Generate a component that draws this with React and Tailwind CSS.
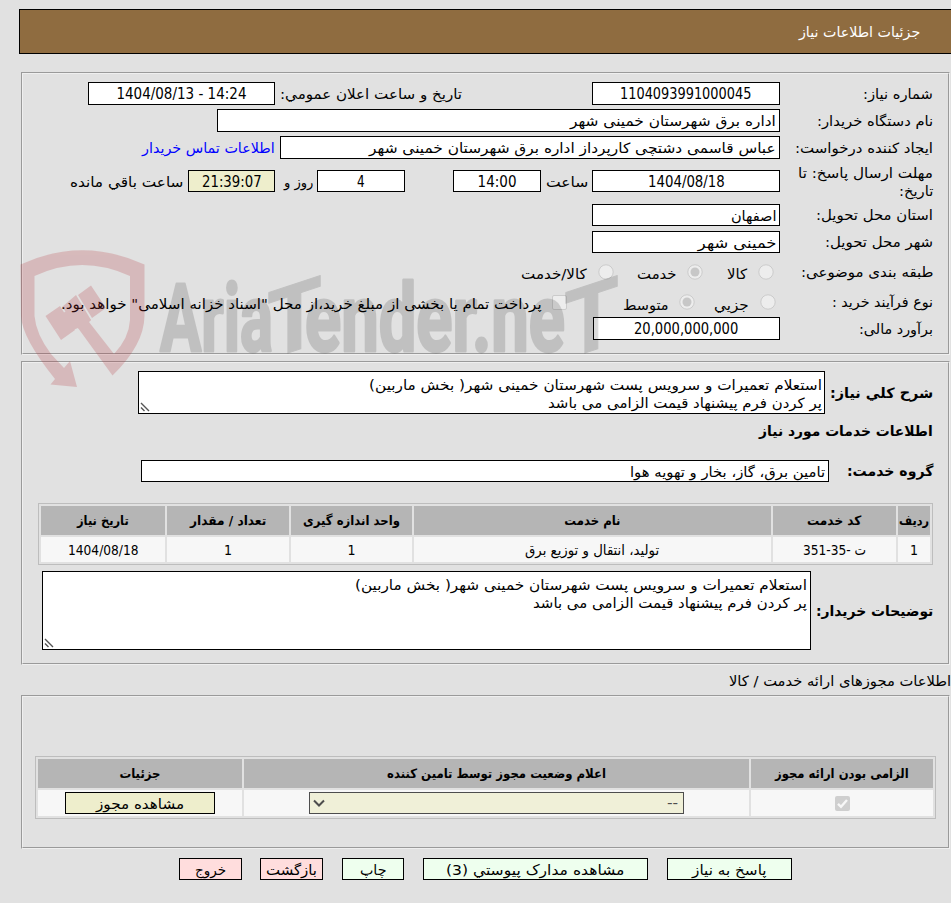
import React, { useLayoutEffect, useRef } from "react";

// A single line of text fitted horizontally to the width given in className.
function Fit({ className = "", center = false, children }) {
  const outer = useRef(null);
  const inner = useRef(null);
  useLayoutEffect(() => {
    const fit = () => {
      const natural = inner.current.offsetWidth;
      if (natural) inner.current.style.transform = `scaleX(${outer.current.offsetWidth / natural})`;
    };
    fit();
    document.fonts?.ready.then(fit);
  }, []);
  return (
    <span ref={outer} className={`block shrink-0 text-right leading-[18px] whitespace-nowrap ${center ? "mx-auto text-[15px]" : ""} ${className}`}>
      <span ref={inner} className="inline-block origin-right">{children}</span>
    </span>
  );
}

function Panel({ className = "", children }) {
  return (
    <section className={`mr-px w-[929px] border border-t-[#9a9a9a] border-l-[#9a9a9a] border-r-[#efefef] border-b-[#efefef] ${className}`}>
      <div className="h-full border border-t-[#efefef] border-l-[#efefef] border-r-[#9a9a9a] border-b-[#9a9a9a]">{children}</div>
    </section>
  );
}

function Row({ className = "", children }) {
  return <div className={`flex items-center pr-[15px] ${className}`}>{children}</div>;
}

function Label({ className = "w-[153px]", children }) {
  return <div className={`shrink-0 ${className}`}>{children}</div>;
}

function Box({ className = "bg-white", children }) {
  return <div className={`flex shrink-0 items-center border border-black px-[3px] pt-px ${className}`}>{children}</div>;
}

function Radio({ checked = false, className = "" }) {
  return (
    <svg viewBox="0 0 16 16" className={`size-4 shrink-0 ${className}`}>
      <circle cx="8" cy="8" r="7.2" fill="#ededed" stroke="#cbcbcb" />
      {checked && <circle cx="8" cy="8" r="4.5" fill="#c7c7c7" />}
    </svg>
  );
}

function Grip() {
  return (
    <svg viewBox="0 0 10 10" className="absolute bottom-[1px] left-[1px] size-[10px]" stroke="#555" strokeWidth="1.4" fill="none">
      <path d="M1 1 L9 9 M1 5.500 L4.500 9" />
    </svg>
  );
}

function Th({ className = "", children }) {
  return <div className={`flex h-[29px] items-center justify-center bg-[#b5b5b5] text-[13px] font-bold ${className}`}>{children}</div>;
}

function Td({ className = "", children }) {
  return <div className={`flex items-center justify-center bg-[#f7f7f7] text-[14px] ${className}`}>{children}</div>;
}

function Action({ className = "", children }) {
  return <button className={`flex h-[22px] shrink-0 items-center justify-center border border-black pt-[2px] ${className}`}>{children}</button>;
}

function Watermark() {
  return (
    <svg viewBox="0 0 951 903" className="pointer-events-none absolute top-0 left-0 h-[903px] w-[951px] [direction:ltr]">
      <g fill="#b43038" opacity="0.22">
        <path fillRule="evenodd" d="M20.500 264.500 Q82 236 144.500 264.500 V316 Q144 345 112.500 375.500 L78 328 L73 330 L62 314 L76 304 L91 320 L89 322 L114 354 Q129 338 130 320 V276 Q82 254 34.500 276 V316 Q36 334 51 354 L64 368 L70 361 L77 387 L50.500 384.500 L55 379 Q22 338 21 316 Z" />
        <path d="M45.500 316 L60 306 L75 330 L61 340 Z M62 307 L76 295 L91 320 L79 329 Z M78 295 L91 285.500 L106 308 L92 318 Z" />
      </g>
      <g fill="#000" stroke="#000" opacity="0.14" strokeWidth="3" strokeLinejoin="round" fontFamily="Roboto" fontWeight="700" fontSize="94">
        <text x="160" y="351" textLength="113" lengthAdjust="spacingAndGlyphs">Aria</text>
        <text transform="matrix(1 -0.33 0 1 267 360)" textLength="55" lengthAdjust="spacingAndGlyphs" strokeWidth="1">T</text>
        <text x="305" y="351" textLength="260" lengthAdjust="spacingAndGlyphs">ender.ne</text>
        <text transform="matrix(1 -0.33 0 1 564 360)" textLength="55" lengthAdjust="spacingAndGlyphs" strokeWidth="1">T</text>
      </g>
    </svg>
  );
}

export default function App() {
  return (
    <main dir="rtl" className="relative h-[903px] w-[951px] overflow-hidden bg-[#e1e1e1] pt-[9px] font-['DejaVu_Sans_Condensed','DejaVu_Sans',sans-serif] text-[14px] text-black">
      <header className="flex h-[45px] w-[932px] items-center border border-r-0 border-black bg-[#8f6c40] pr-[31px] text-white">
        <Fit className="w-[121px]">جزئیات اطلاعات نیاز</Fit>
      </header>

      <Panel className="mt-[18px] h-[283px]">
        <Row className="mt-2 h-[23px]">
          <Label><Fit className="w-[70px]">شماره نیاز:</Fit></Label>
          <Box className="h-full w-[188px] bg-white"><Fit center className="w-[131px]">1104093991000045</Fit></Box>
          <Fit className="mr-[130px] w-[182px]">تاریخ و ساعت اعلان عمومي:</Fit>
          <Box className="mr-[5px] h-full w-[187px] bg-white"><Fit center className="w-[130px]"><bdi dir="ltr">1404/08/13 - 14:24</bdi></Fit></Box>
        </Row>
        <Row className="mt-1 h-[23px]">
          <Label><Fit className="w-[116px]">نام دستگاه خریدار:</Fit></Label>
          <Box className="h-full w-[563px] bg-white"><Fit className="w-[206px]">اداره برق شهرستان خمینی شهر</Fit></Box>
        </Row>
        <Row className="mt-1 h-[23px]">
          <Label><Fit className="w-[138px]">ایجاد کننده درخواست:</Fit></Label>
          <Box className="h-full w-[500px] bg-white"><Fit className="w-[407px]">عباس قاسمی دشتچی کارپرداز اداره برق شهرستان خمینی شهر</Fit></Box>
          <Fit className="mr-[5px] w-[133px] text-[#0000ff]">اطلاعات تماس خریدار</Fit>
        </Row>
        <Row className="mt-[3px] h-[38px]">
          <Label className="w-[153px] pt-[2px]">
            <Fit className="w-[135px]">مهلت ارسال پاسخ: تا</Fit>
            <Fit className="w-[34px]">تاریخ:</Fit>
          </Label>
          <Box className="h-[22px] w-[188px] bg-white"><Fit center className="w-[77px]">1404/08/18</Fit></Box>
          <Fit className="mr-[4px] w-[42px] pt-[2px]">ساعت</Fit>
          <Box className="mr-[5px] h-[22px] w-[88px] bg-white"><Fit center className="w-[39px]">14:00</Fit></Box>
          <Box className="mr-[48px] h-[22px] w-[88px] bg-white"><Fit center className="w-[8px]">4</Fit></Box>
          <Fit className="mr-[4px] w-[29px] pt-[2px]">روز و</Fit>
          <Box className="mr-[9px] h-[22px] w-[87px] bg-[#eeeecc]"><Fit center className="w-[60px]">21:39:07</Fit></Box>
          <Fit className="mr-[5px] w-[113px] pt-[2px]">ساعت باقي مانده</Fit>
        </Row>
        <Row className="mt-1 h-[22px]">
          <Label><Fit className="w-[117px]">استان محل تحویل:</Fit></Label>
          <Box className="h-full w-[188px] bg-white"><Fit className="w-[45px]">اصفهان</Fit></Box>
        </Row>
        <Row className="mt-[5px] h-[22px]">
          <Label><Fit className="w-[108px]">شهر محل تحویل:</Fit></Label>
          <Box className="h-full w-[188px] bg-white"><Fit className="w-[78px]">خمینی شهر</Fit></Box>
        </Row>
        <Row className="mt-[7px] h-6">
          <Label className="w-[159px]"><Fit className="w-[132px]">طبقه بندی موضوعی:</Fit></Label>
          <Radio />
          <Fit className="mr-[11px] w-[20px] pt-1">کالا</Fit>
          <Radio checked className="mr-[24px]" />
          <Fit className="mr-[10px] w-[40px] pt-1">خدمت</Fit>
          <Radio className="mr-[23px]" />
          <Fit className="mr-[11px] w-[66px] pt-1">کالا/خدمت</Fit>
        </Row>
        <Row className="mt-[6px] h-6">
          <Label className="w-[157px]"><Fit className="w-[101px]">نوع فرآیند خرید :</Fit></Label>
          <Radio />
          <Fit className="mr-[11px] w-[35px] pt-1.5">جزيي</Fit>
          <Radio checked className="mr-[19px]" />
          <Fit className="mr-[10px] w-[46px] pt-1.5">متوسط</Fit>
          <span className="mr-[56px] size-[15px] shrink-0 rounded-[2px] border border-[#cbcbcb] bg-[#ededed]" />
          <Fit className="mr-[10px] w-[481px] pt-1">پرداخت تمام یا بخشی از مبلغ خرید،از محل "اسناد خزانه اسلامی" خواهد بود.</Fit>
        </Row>
        <Row className="mt-[3px] h-[23px]">
          <Label><Fit className="w-[74px] pt-px">برآورد مالی:</Fit></Label>
          <Box className="h-full w-[187px] bg-white"><Fit center className="w-[104px]">20,000,000,000</Fit></Box>
        </Row>
      </Panel>

      <Panel className="mt-[6px] h-[304px]">
        <Row className="mt-2 h-[43px]">
          <Label className="w-[108px] font-bold"><Fit className="w-[103px]">شرح كلي نياز:</Fit></Label>
          <div className="relative h-full w-[687px] border border-black bg-white pt-[4px] pr-[2px]">
            <Fit className="w-[453px]">استعلام تعمیرات و سرویس پست شهرستان خمینی شهر( بخش ماربین)</Fit>
            <Fit className="w-[274px]">پر کردن فرم پیشنهاد قیمت الزامی می باشد</Fit>
            <Grip />
          </div>
        </Row>
        <Row className="mt-[6px] h-[22px] font-bold"><Fit className="w-[174px]">اطلاعات خدمات مورد نیاز</Fit></Row>
        <Row className="mt-[18px] h-[22px]">
          <Label className="w-[104px] font-bold"><Fit className="w-[86px]">گروه خدمت:</Fit></Label>
          <Box className="h-full w-[688px] bg-white"><Fit className="w-[195px]">تامین برق، گاز، بخار و تهویه هوا</Fit></Box>
        </Row>
        <div className="mt-[21px] mr-[15px] grid h-[62px] w-[895px] grid-cols-[32px_123px_357px_121px_122px_124px] content-start gap-[2px] border border-[#bdbdbd] p-[2px]">
          <Th><Fit className="w-[30px]">ردیف</Fit></Th>
          <Th><Fit className="w-[54px]">کد خدمت</Fit></Th>
          <Th><Fit className="w-[56px]">نام خدمت</Fit></Th>
          <Th><Fit className="w-[97px]">واحد اندازه گیری</Fit></Th>
          <Th><Fit className="w-[76px]">تعداد / مقدار</Fit></Th>
          <Th><Fit className="w-[52px]">تاریخ نیاز</Fit></Th>
          <Td className="h-[25px]"><Fit className="w-[8px]">1</Fit></Td>
          <Td><Fit className="w-[63px]">ت -35-351</Fit></Td>
          <Td className="text-[13px]"><Fit className="w-[134px]">تولید، انتقال و توزیع برق</Fit></Td>
          <Td><Fit className="w-[8px]">1</Fit></Td>
          <Td><Fit className="w-[8px]">1</Fit></Td>
          <Td><Fit className="w-[71px]">1404/08/18</Fit></Td>
        </div>
        <Row className="mt-[6px] h-[79px]">
          <Label className="w-[122px] font-bold"><Fit className="w-[117px]">توضیحات خریدار:</Fit></Label>
          <div className="relative h-full w-[769px] border border-black bg-white pt-[4px] pr-[3px]">
            <Fit className="w-[452px]">استعلام تعمیرات و سرویس پست شهرستان خمینی شهر( بخش ماربین)</Fit>
            <Fit className="w-[274px]">پر کردن فرم پیشنهاد قیمت الزامی می باشد</Fit>
            <Grip />
          </div>
        </Row>
      </Panel>

      <div className="flex h-[30px] items-center pt-[2px]"><Fit className="w-[222px]">اطلاعات مجوزهای ارائه خدمت / کالا</Fit></div>

      <Panel className="h-[154px]">
        <div className="mt-[59px] mr-[12px] grid h-[63px] w-[901px] grid-cols-[182px_505px_204px] content-start gap-[2px] border border-[#bdbdbd] p-[2px]">
          <Th><Fit className="w-[134px] pt-px">الزامی بودن ارائه مجوز</Fit></Th>
          <Th><Fit className="w-[219px] pt-px">اعلام وضعیت مجوز توسط تامین کننده</Fit></Th>
          <Th><Fit className="w-[41px] pt-px">جزئیات</Fit></Th>
          <Td className="h-[26px]">
            <svg viewBox="0 0 15 15" className="size-[15px]">
              <rect width="15" height="15" rx="2" fill="#cfcfcf" />
              <path d="M3 7.800 L6 10.800 L12 4" fill="none" stroke="#f7f7f7" strokeWidth="2.4" />
            </svg>
          </Td>
          <Td>
            <div className="flex h-[22px] w-[375px] items-center justify-between border border-[#4d4d4d] bg-[#f0f0d8] pr-[5px] pl-[3px] text-[#4d4d4d]">
              <Fit className="w-[11px]">--</Fit>
              <svg viewBox="0 0 12 12" className="size-3" fill="none" stroke="#4d4d4d" strokeWidth="2"><path d="M1 3.500 L6 8.500 L11 3.500" /></svg>
            </div>
          </Td>
          <Td><Action className="w-[150px] bg-[#eeeecc]"><Fit className="w-[88px]">مشاهده مجوز</Fit></Action></Td>
        </div>
      </Panel>

      <nav className="mt-[9px] mr-[159px] flex gap-[19px]">
        <Action className="w-[125px] bg-[#eeffee]"><Fit className="w-[75px]">پاسخ به نیاز</Fit></Action>
        <Action className="w-[225px] bg-[#eeffee]"><Fit className="w-[178px]">مشاهده مدارک پيوستي (3)</Fit></Action>
        <Action className="w-[62px] bg-[#eeffee]"><Fit className="w-[26px]">چاپ</Fit></Action>
        <Action className="w-[63px] bg-[#ffdddd]"><Fit className="w-[51px]">بازگشت</Fit></Action>
        <Action className="-mr-px w-[63px] bg-[#ffdddd]"><Fit className="w-[31px]">خروج</Fit></Action>
      </nav>

      <Watermark />
    </main>
  );
}
